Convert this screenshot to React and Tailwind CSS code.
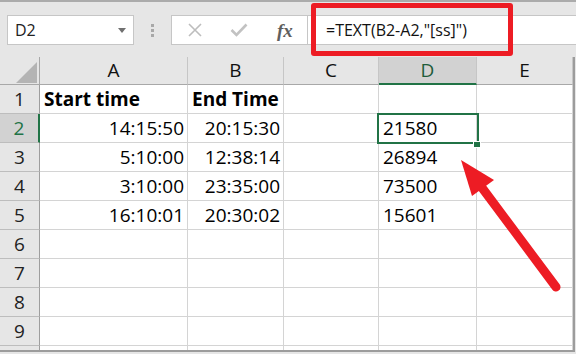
import React from 'react';

const columns = ['A', 'B', 'C', 'D', 'E'];

const rows = [
  { n: 1, a: 'Start time', b: 'End Time', d: '', head: true },
  { n: 2, a: '14:15:50', b: '20:15:30', d: '21580' },
  { n: 3, a: '5:10:00', b: '12:38:14', d: '26894' },
  { n: 4, a: '3:10:00', b: '23:35:00', d: '73500' },
  { n: 5, a: '16:10:01', b: '20:30:02', d: '15601' },
  { n: 6, a: '', b: '', d: '' },
  { n: 7, a: '', b: '', d: '' },
  { n: 8, a: '', b: '', d: '' },
  { n: 9, a: '', b: '', d: '' },
  // row 10 is only a sliver at the bottom, its number is out of view
  { n: 10, a: '', b: '', d: '', hidden: true },
];

function Toolbar() {
  return (
    <div className="h-[57px] border-t-2 border-[#ababab] flex items-start pt-[13px] pl-[7px]">
      {/* name box */}
      <div className="w-[127px] h-[30px] bg-white border border-[#c6c6c6] flex items-center justify-between pl-[7px] pr-[7px] text-[16px] text-[#222]">
        <span>D2</span>
        <svg width="8" height="5" viewBox="0 0 8 5">
          <polygon points="0,0 8,0 4,5" fill="#707070" />
        </svg>
      </div>

      {/* grip dots */}
      <div className="w-[37px] h-[30px] flex flex-col items-center justify-center gap-[2px]">
        <div className="w-[3px] h-[3px] bg-[#a8a8a8]" />
        <div className="w-[3px] h-[3px] bg-[#a8a8a8]" />
        <div className="w-[3px] h-[3px] bg-[#a8a8a8]" />
      </div>

      {/* cancel / enter / fx */}
      <div className="w-[137px] h-[30px] bg-white border border-[#c6c6c6] flex items-center pl-[16px]">
        <svg width="14" height="14" viewBox="0 0 14 14">
          <path d="M1 1 L13 13 M13 1 L1 13" stroke="#bdbdbd" strokeWidth="1.6" fill="none" />
        </svg>
        <svg width="18" height="14" viewBox="0 0 18 14" className="ml-[28px]">
          <path d="M1.5 7 L6.5 12 L16.5 1.5" stroke="#c2c2c2" strokeWidth="2.6" fill="none" />
        </svg>
        <span className="ml-[29px] text-[19px] leading-none italic font-semibold text-[#5f5f5f] font-['Liberation_Serif',serif]">
          fx
        </span>
      </div>

      {/* formula input */}
      <div className="flex-1 h-[30px] bg-white border-y border-[#c6c6c6] flex items-center pl-[18px] text-[16px] text-[#111]">
        =TEXT(B2-A2,"[ss]")
      </div>
    </div>
  );
}

function HeaderRow() {
  return (
    <>
      <div className="h-[28px] bg-[#e6e6e6] border-r border-b border-[#a8a8a8] relative">
        <svg width="21" height="21" viewBox="0 0 21 21" className="absolute left-[16px] top-[5px]">
          <polygon points="21,0 21,21 0,21" fill="#b4b4b4" />
        </svg>
      </div>
      {columns.map((c) =>
        c === 'D' ? (
          <div
            key={c}
            className="h-[28px] bg-[#d2d2d2] border-r border-[#c6c6c6] border-b-2 border-b-[#217346] flex items-center justify-center text-[19px] text-[#1e5c3a]"
          >
            {c}
          </div>
        ) : (
          <div
            key={c}
            className="h-[28px] bg-[#e6e6e6] border-r border-b border-[#c6c6c6] border-b-[#a8a8a8] flex items-center justify-center text-[19px] text-[#111]"
          >
            {c}
          </div>
        )
      )}
    </>
  );
}

function DataRow({ row }) {
  const active = row.n === 2;
  const cell = 'h-[29px] bg-white border-r border-b border-[#d4d4d4] leading-[28px] text-[19px] text-black whitespace-nowrap overflow-hidden';
  return (
    <>
      {active ? (
        <div className="h-[29px] bg-[#d2d2d2] border-r-2 border-r-[#217346] border-b border-b-[#bdbdbd] text-center leading-[28px] text-[19px] text-[#217346]">
          {row.n}
        </div>
      ) : (
        <div className="h-[29px] bg-[#e6e6e6] border-r border-r-[#9e9e9e] border-b border-b-[#bdbdbd] text-center leading-[28px] text-[19px] text-[#222]">
          {row.hidden ? '' : row.n}
        </div>
      )}
      <div className={`${cell} ${row.head ? 'font-bold text-left pl-[4px]' : 'text-right pr-[3px]'}`}>{row.a}</div>
      <div className={`${cell} ${row.head ? 'font-bold text-left pl-[4px]' : 'text-right pr-[3px]'}`}>{row.b}</div>
      <div className={cell} />
      <div className={`${cell} pl-[4px]`}>{row.d}</div>
      <div className={cell} />
    </>
  );
}

export default function App() {
  return (
    <div className="w-[576px] h-[354px] overflow-hidden relative bg-[#e6e6e6] font-['Open_Sans',sans-serif]">
      <Toolbar />

      <div className="w-[575px] h-[295px] overflow-hidden border-r-2 border-b-2 border-[#9c9c9c]">
        <div className="grid grid-cols-[40px_148px_96px_95px_98px_1fr]">
          <HeaderRow />
          {rows.map((row) => (
            <DataRow key={row.n} row={row} />
          ))}
        </div>
      </div>

      {/* active cell D2 */}
      <div className="absolute left-[377px] top-[113px] w-[102px] h-[31px] border-2 border-[#217346]" />
      <div className="absolute left-[473px] top-[141px] w-[6px] h-[5px] bg-[#217346] border border-white box-content" />

      {/* red highlight around formula */}
      <div className="absolute left-[311px] top-[3px] w-[202px] h-[53px] border-[5px] border-[#ed1c24] rounded-[3px]" />

      {/* red arrow */}
      <svg className="absolute left-0 top-0 pointer-events-none" width="576" height="354" viewBox="0 0 576 354">
        <line x1="556" y1="287" x2="480" y2="185" stroke="#ed1c24" strokeWidth="9" strokeLinecap="round" />
        <polygon points="461,160 472,196 494,180" fill="#ed1c24" />
      </svg>
    </div>
  );
}
